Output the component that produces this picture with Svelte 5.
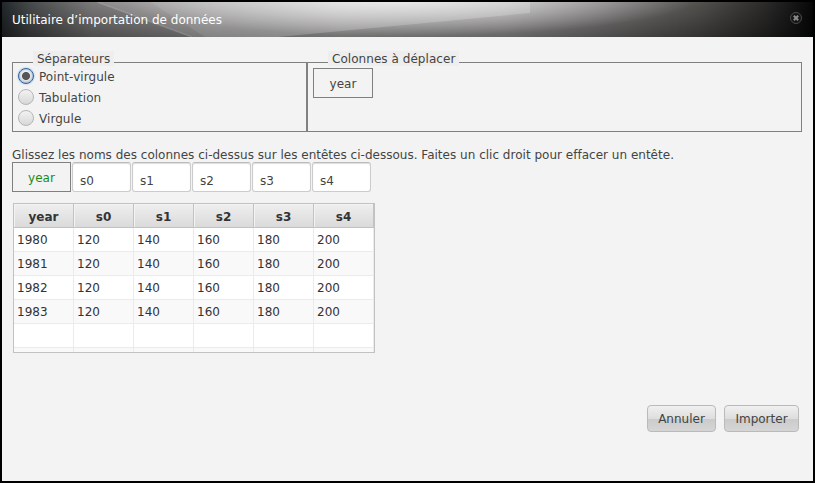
<script>
  const separators = ['Point-virgule', 'Tabulation', 'Virgule'];
  let selected = $state('Point-virgule');
  const headers = ['year', 's0', 's1', 's2', 's3', 's4'];
  const rows = [
    ['1980', '120', '140', '160', '180', '200'],
    ['1981', '120', '140', '160', '180', '200'],
    ['1982', '120', '140', '160', '180', '200'],
    ['1983', '120', '140', '160', '180', '200'],
    ['', '', '', '', '', ''],
    ['', '', '', '', '', '']
  ];
</script>

<div class="dialog">
  <header class="titlebar">
    <svg class="shine" width="811" height="35" viewBox="0 0 811 35" aria-hidden="true">
      <defs>
        <linearGradient id="across" x1="0" x2="1" y1="0" y2="0">
          <stop offset="0" stop-color="#22282a" />
          <stop offset=".035" stop-color="#484b4c" />
          <stop offset=".11" stop-color="#7c7a7a" />
          <stop offset=".26" stop-color="#a3a1a1" />
          <stop offset=".42" stop-color="#b8b7b6" />
          <stop offset=".62" stop-color="#a5a3a3" />
          <stop offset=".73" stop-color="#828080" />
          <stop offset=".86" stop-color="#52514e" />
          <stop offset=".94" stop-color="#2c2b2a" />
          <stop offset="1" stop-color="#050807" />
        </linearGradient>
        <linearGradient id="down" x1="0" x2="0" y1="0" y2="1">
          <stop offset="0" stop-color="#000" stop-opacity="0" />
          <stop offset="1" stop-color="#000" stop-opacity=".38" />
        </linearGradient>
        <radialGradient id="glow" gradientUnits="userSpaceOnUse" cx="0" cy="0" r="1" gradientTransform="translate(405 -4) scale(290 38)">
          <stop offset="0" stop-color="#fff" stop-opacity=".7" />
          <stop offset="1" stop-color="#fff" stop-opacity="0" />
        </radialGradient>
      </defs>
      <rect width="811" height="35" fill="url(#across)" />
      <rect width="811" height="35" fill="url(#down)" />
      <rect width="811" height="35" fill="url(#glow)" />
      <path d="M148 0L203 35L276 35L528 11V0Z" fill="#fff" opacity=".2" />
      <path d="M95 0H148L203 35H190Z" fill="#fff" opacity=".13" />
      <path d="M95 0L190 35" stroke="#fff" stroke-width="1.5" opacity=".14" />
    </svg>
    <h1>Utilitaire d’importation de données</h1>
    <button class="close" aria-label="Fermer">
      <svg width="14" height="14" viewBox="0 0 14 14">
        <circle cx="7" cy="7" r="5.5" fill="#151515" stroke="#4a4a4a" />
        <path d="M4.8 4.8L9.2 9.2M9.2 4.8L4.8 9.2" stroke="#8c8c8c" stroke-width="2" />
      </svg>
    </button>
  </header>

  <main>
    <div class="groups">
      <section class="group separators">
        <h2>Séparateurs</h2>
        {#each separators as name}
          <label>
            <input type="radio" name="separator" value={name} bind:group={selected} />
            <span>{name}</span>
          </label>
        {/each}
      </section>
      <section class="group columns">
        <h2>Colonnes à déplacer</h2>
        <div class="chip">year</div>
      </section>
    </div>

    <p>Glissez les noms des colonnes ci-dessus sur les entêtes ci-dessous. Faites un clic droit pour effacer un entête.</p>

    <div class="targets">
      {#each headers as name, i}
        <div class="target" class:assigned={i === 0}>{name}</div>
      {/each}
    </div>

    <div class="grid">
      <div class="row head">
        {#each headers as name}<div class="cell">{name}</div>{/each}
      </div>
      {#each rows as row, r}
        <div class="row" class:odd={r % 2 === 1}>
          {#each row as value}<div class="cell">{value}</div>{/each}
        </div>
      {/each}
    </div>

    <footer>
      <button class="action cancel">Annuler</button>
      <button class="action import">Importer</button>
    </footer>
  </main>
</div>

<style>
  .dialog {
    box-sizing: border-box;
    width: 815px;
    height: 483px;
    border: 2px solid #000;
    background: #f3f3f3;
    color: #444;
    font: 12px/16px "DejaVu Sans", sans-serif;
    overflow: hidden;
  }
  .titlebar {
    position: relative;
    display: flex;
    align-items: center;
    justify-content: space-between;
    height: 35px;
    padding: 0 10px;
  }
  .shine {
    position: absolute;
    inset: 0;
  }
  h1 {
    position: relative;
    margin: 0;
    color: #fff;
    font-size: 12px;
    font-weight: normal;
  }
  .close {
    position: relative;
    width: 14px;
    height: 14px;
    padding: 0;
    border: 0;
    background: none;
    margin-bottom: 3px;
  }
  .close svg { display: block; }
  main { padding: 25px 10px 0; }
  .groups { display: flex; }
  .group {
    box-sizing: border-box;
    height: 70px;
    border: 1px solid #808080;
    padding-left: 5px;
  }
  .separators { width: 295px; }
  .columns { width: 495px; }
  h2 {
    box-sizing: border-box;
    width: 81px;
    height: 15px;
    margin: -12px 0 0 15px;
    padding: 0 4px;
    background: #eee;
    font-size: 12px;
    line-height: 17px;
    font-weight: normal;
    white-space: nowrap;
  }
  .columns h2 {
    width: 131px;
    letter-spacing: .05px;
  }
  label {
    display: flex;
    align-items: center;
    gap: 5px;
    height: 21px;
    letter-spacing: .06px;
  }
  input[type='radio'] {
    appearance: none;
    box-sizing: border-box;
    flex: none;
    width: 16px;
    height: 16px;
    margin: 0 0 2px;
    border: 1px solid #b5b5b5;
    border-radius: 50%;
    background: linear-gradient(#f2f2f2, #d8d8d8);
  }
  input[type='radio']:checked {
    border-color: #2f5f9e;
    background: radial-gradient(circle, #555 0 3.6px, transparent 4.4px), linear-gradient(#f2f2f2, #dcdcdc);
    box-shadow: 0 0 2px #7eb6e6, inset 0 0 2px #4d88c4;
  }
  .chip {
    box-sizing: border-box;
    width: 60px;
    height: 30px;
    margin-top: 2px;
    border: 1px solid #808080;
    line-height: 30px;
    text-align: center;
  }
  p {
    margin: 15px 0 0;
    height: 15px;
    line-height: 16px;
    letter-spacing: .013px;
    white-space: nowrap;
  }
  .targets {
    display: flex;
    gap: 1px;
  }
  .target {
    box-sizing: border-box;
    width: 59px;
    height: 30px;
    padding: 4px 7px 0;
    border: 1px solid #ccc;
    border-top-color: #bbb;
    border-radius: 3px;
    background: #fff;
    box-shadow: inset 0 1px 1px #ddd;
    line-height: 28px;
  }
  .assigned {
    padding: 1px 0 0;
    border-color: #808080;
    border-radius: 0;
    background: none;
    box-shadow: none;
    color: #1a8c1a;
    text-align: center;
  }
  .grid {
    box-sizing: border-box;
    width: 362px;
    height: 150px;
    margin: 11px 0 0 1px;
    border: 1px solid #c2c2c2;
    background: #fff;
    overflow: hidden;
  }
  .row {
    display: flex;
    height: 24px;
    color: #333;
  }
  .odd { background: #f9f9f9; }
  .cell {
    box-sizing: border-box;
    width: 60px;
    height: 24px;
    padding-left: 3px;
    border-right: 1px solid #ebebeb;
    border-bottom: 1px solid #ebebeb;
    line-height: 24px;
  }
  .head .cell {
    padding: 0;
    border-color: #c2c2c2;
    background: linear-gradient(#efefef, #dadada);
    box-shadow: inset 1px 1px 0 #f3f3f3;
    font-weight: bold;
    text-align: center;
    line-height: 26px;
  }
  footer {
    display: flex;
    gap: 8px;
    margin: 52px 0 0 635px;
  }
  .action {
    box-sizing: border-box;
    height: 27px;
    padding: 2px 0 0;
    border: 1px solid #bababa;
    border-radius: 4px;
    background: linear-gradient(#f0f0f0, #dedede 50%, #cbcbcb 52%, #d6d6d6);
    color: #444;
    font: 12px/23px "DejaVu Sans", sans-serif;
  }
  .cancel { width: 69px; }
  .import { width: 75px; }
</style>
